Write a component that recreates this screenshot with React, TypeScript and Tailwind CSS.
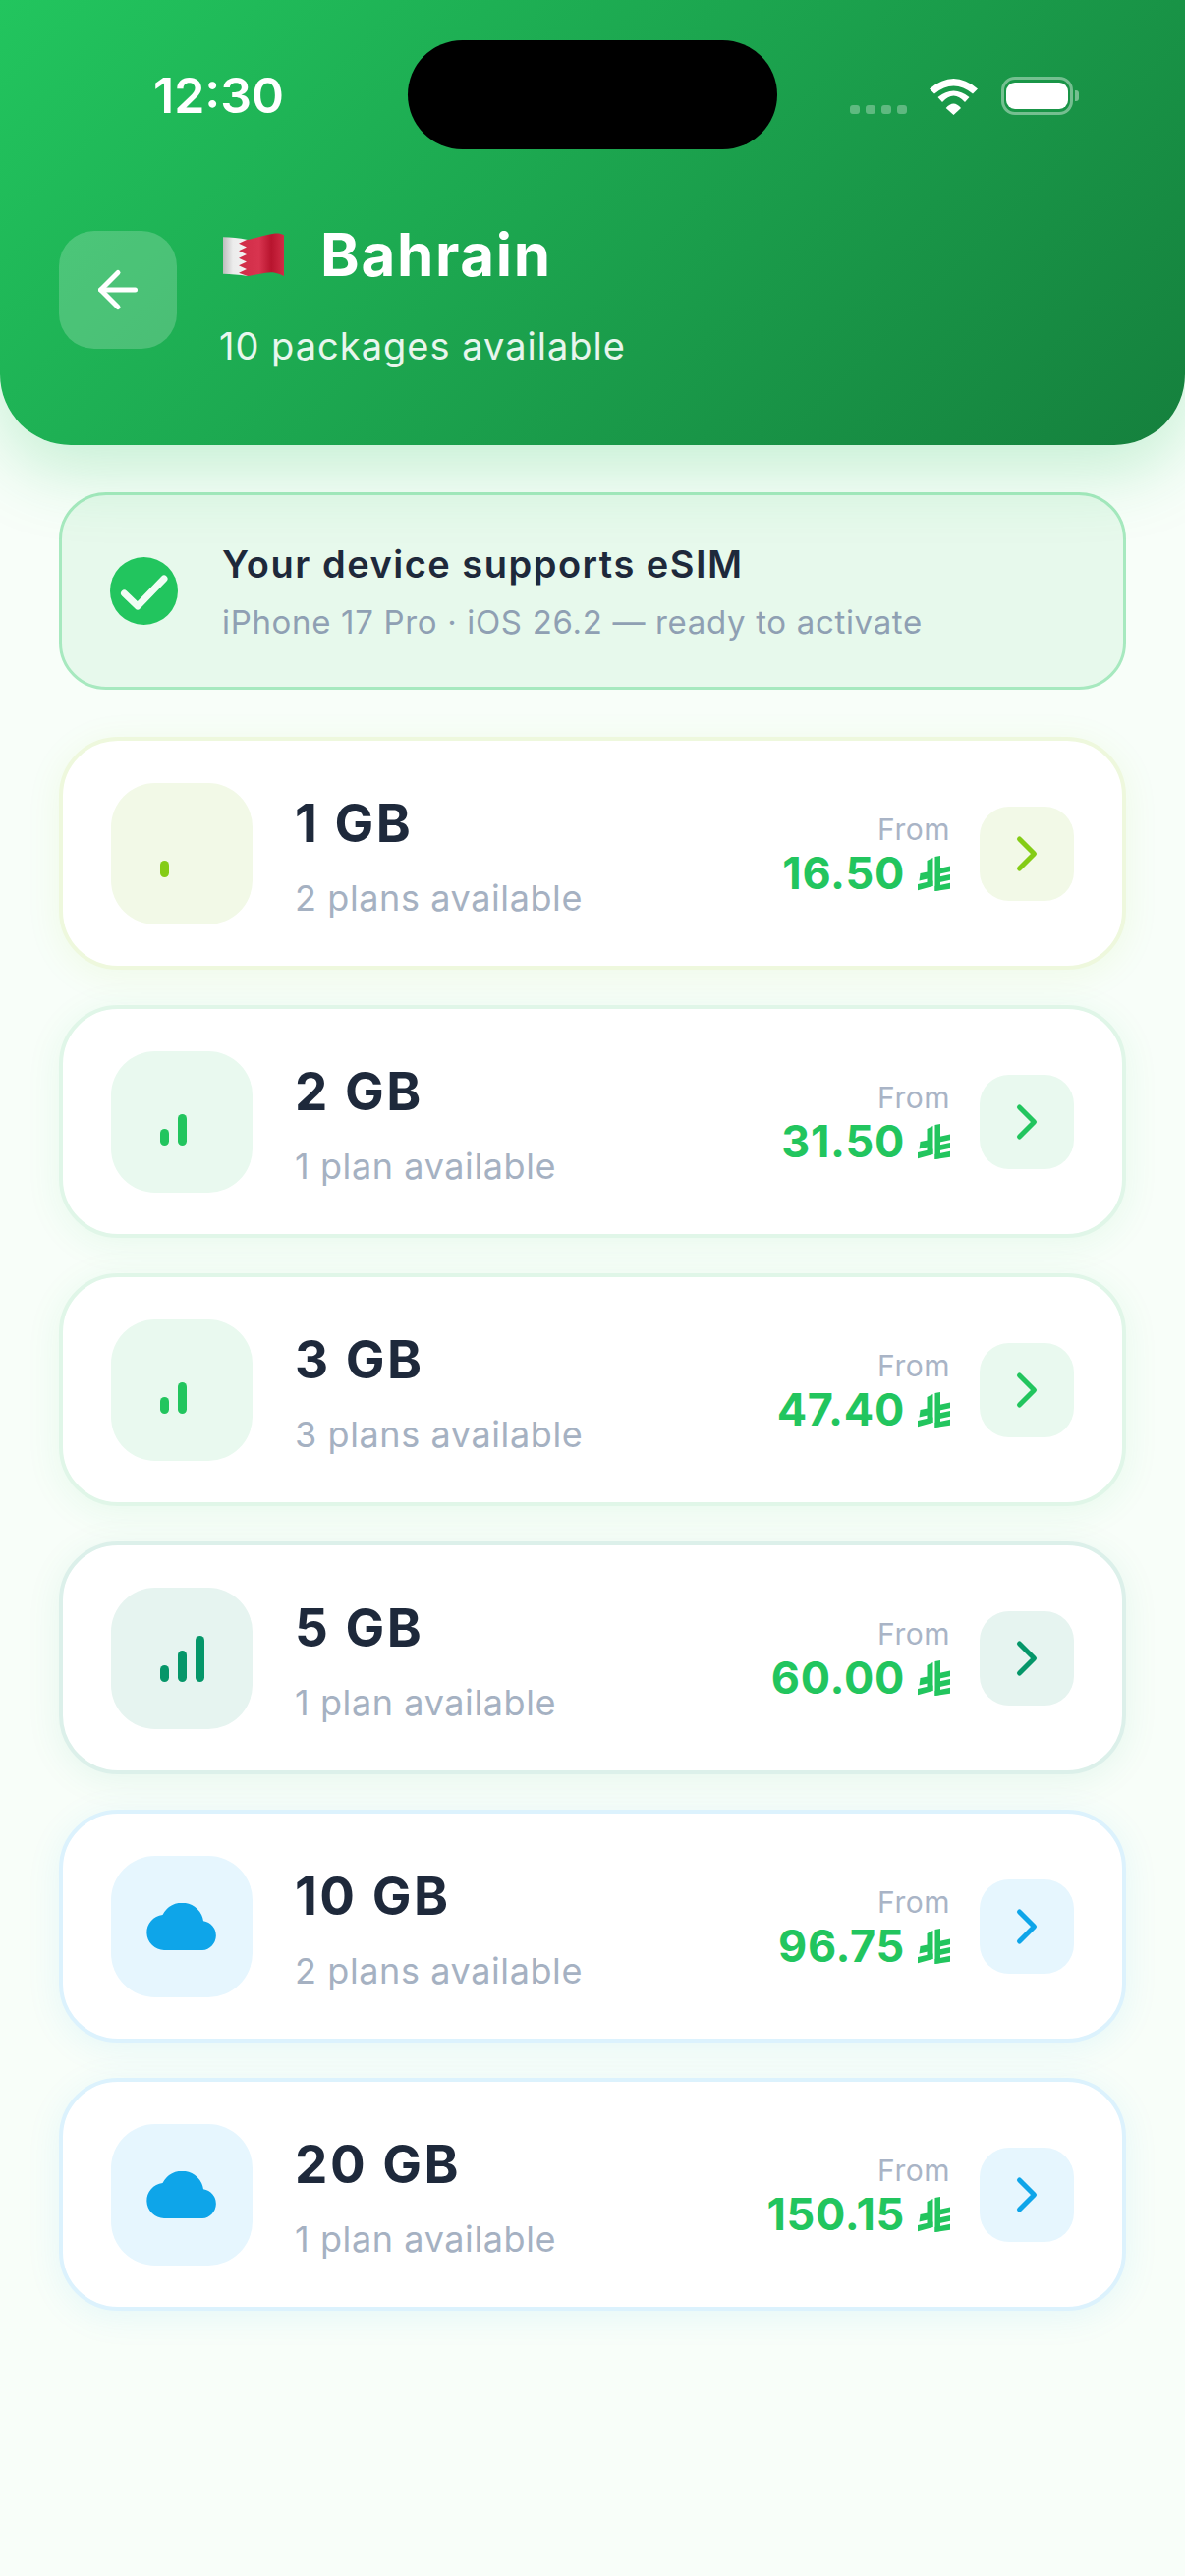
import React from "react";

type Accent = { border: string; soft: string; stroke: string; fill: string; shadow: string };

const lime: Accent = { border: "border-[#eef8dd]", soft: "bg-[#f2f9e7]", stroke: "stroke-[#84cc16]", fill: "fill-[#84cc16]", shadow: "shadow-[0_6px_36px_rgba(132,204,22,0.08)]" };
const green: Accent = { border: "border-[#e0f6e8]", soft: "bg-[#e9f9ef]", stroke: "stroke-[#22c55e]", fill: "fill-[#22c55e]", shadow: "shadow-[0_6px_36px_rgba(34,197,94,0.08)]" };
const teal: Accent = { border: "border-[#dcf0ea]", soft: "bg-[#e6f4f0]", stroke: "stroke-[#059669]", fill: "fill-[#059669]", shadow: "shadow-[0_6px_36px_rgba(5,150,105,0.08)]" };
const sky: Accent = { border: "border-[#dcf2fd]", soft: "bg-[#e6f6fe]", stroke: "stroke-[#0ea5e9]", fill: "fill-[#0ea5e9]", shadow: "shadow-[0_6px_36px_rgba(14,165,233,0.08)]" };

const rows = [
  { gb: "1 GB", plans: "2 plans available", price: "16.50", accent: lime, bars: 1 },
  { gb: "2 GB", plans: "1 plan available", price: "31.50", accent: green, bars: 2 },
  { gb: "3 GB", plans: "3 plans available", price: "47.40", accent: green, bars: 2 },
  { gb: "5 GB", plans: "1 plan available", price: "60.00", accent: teal, bars: 3 },
  { gb: "10 GB", plans: "2 plans available", price: "96.75", accent: sky, bars: 0 },
  { gb: "20 GB", plans: "1 plan available", price: "150.15", accent: sky, bars: 0 },
];

function Bars({ count, cls }: { count: number; cls: string }) {
  return (
    <svg width="45" height="48" viewBox="0 0 45 48" className={cls}>
      <rect x="0" y="31" width="9" height="17" rx="4.5" />
      {count > 1 && <rect x="18" y="16" width="9" height="32" rx="4.5" />}
      {count > 2 && <rect x="36" y="1" width="9" height="47" rx="4.5" />}
    </svg>
  );
}

function Cloud({ cls }: { cls: string }) {
  return (
    <svg width="72" height="48" viewBox="0 0 72 48" className={cls}>
      <path d="M18 48A18 18 0 0 1 16.5 12.1A22 22 0 0 1 58 18.2A15 15 0 0 1 57 48Z" />
    </svg>
  );
}

function Riyal() {
  return (
    <svg width="33" height="36" viewBox="0 0 33 36" className="fill-[#22c55e] shrink-0">
      <path d="M9.5 5L15.5 2V31H9.5Z" />
      <path d="M17.5 1L23 0V35L17.5 36Z" />
      <path d="M2.5 18L10 16.5V23.5L1.5 25.4Z" />
      <path d="M0 29L15.5 25.5V31L0 35.2Z" />
      <path d="M22.5 12.8L33 10.5V16.3L22.5 18.5Z" />
      <path d="M22.5 21.2L33 19V24.8L22.5 27Z" />
      <path d="M17.5 31L33 27.8V33.8L17.5 36Z" />
    </svg>
  );
}

function Flag() {
  return (
    <svg width="64" height="45" viewBox="0 1 64 42" preserveAspectRatio="none">
      <defs>
        <linearGradient id="red" x1="0" y1="0" x2="1" y2="0">
          <stop offset="0" stopColor="#d02c47" />
          <stop offset="0.45" stopColor="#d8344f" />
          <stop offset="0.72" stopColor="#b8142e" />
          <stop offset="1" stopColor="#d02c46" />
        </linearGradient>
        <linearGradient id="white" x1="0" y1="0" x2="1" y2="0">
          <stop offset="0" stopColor="#bdbdbd" />
          <stop offset="0.4" stopColor="#ececec" />
          <stop offset="1" stopColor="#f2f2f2" />
        </linearGradient>
      </defs>
      <path d="M0 5C8 5 16 6 25 7.5V42C16 41 8 40 0 40Z" fill="url(#white)" />
      <path d="M24 7.5L16 11L24 14.5L16 18L24 21.5L16 25L24 28.5L16 32L24 35.5L16 39L25 42C34 41.5 44 37.5 53 39C57 39.8 60 41 62 42V3C59 1.5 56 1.2 53 1.5C43 2.5 34 6.5 24 7.5Z" fill="url(#red)" />
    </svg>
  );
}

function Wifi() {
  return (
    <svg width="49" height="37" viewBox="0 0 49 37" className="fill-white">
      <path d="M0 10.5Q24.5 -10.5 49 10.5L44 15.5Q24.5 -0.5 5 15.5Z" />
      <path d="M8.5 19Q24.5 6 40.5 19L36 24Q24.5 11 13 24Z" />
      <path d="M16.7 30Q24.5 21 32 30L24.5 37Z" />
    </svg>
  );
}

function Row({ r }: { r: (typeof rows)[number] }) {
  const a = r.accent;
  return (
    <div className={`flex h-[237px] items-center rounded-[60px] border-4 bg-white pl-[49px] pr-[49px] ${a.border} ${a.shadow}`}>
      <div className={`flex h-[144px] w-[144px] shrink-0 items-center justify-center rounded-[45px] ${a.soft}`}>
        {r.bars > 0 ? <Bars count={r.bars} cls={a.fill} /> : <Cloud cls={a.fill} />}
      </div>
      <div className="ml-[43px] mt-[5px] flex flex-col">
        <span className="text-[53px] leading-[62px] font-bold tracking-[2.5px] text-[#1e293b]">{r.gb}</span>
        <span className="mt-[23px] text-[36px] leading-[44px] tracking-[0.6px] text-[#a5b1c2]">{r.plans}</span>
      </div>
      <div className="ml-auto mt-[4px] flex flex-col items-end">
        <span className="text-[30px] leading-[36px] tracking-[0.5px] text-[#a9b4c6]">From</span>
        <span className="flex items-center gap-[13px] text-[45px] leading-[54px] font-bold tracking-[0.7px] text-[#22c55e]">
          {r.price}
          <Riyal />
        </span>
      </div>
      <div className={`ml-[30px] flex h-[96px] w-[96px] shrink-0 items-center justify-center rounded-[30px] ${a.soft}`}>
        <svg width="60" height="60" viewBox="0 0 24 24" fill="none" strokeWidth="2" strokeLinecap="round" strokeLinejoin="round" className={a.stroke}>
          <path d="m9 18 6-6-6-6" />
        </svg>
      </div>
    </div>
  );
}

export default function App() {
  return (
    <div className="min-h-[2622px] w-[1206px] bg-[#f8fef9] font-['Inter',sans-serif]">
      <header className="relative h-[453px] rounded-b-[72px] bg-[linear-gradient(135deg,#22c55e,#15803d)] shadow-[0_24px_72px_rgba(34,197,94,0.25)]">
        <div className="absolute left-[415px] top-[41px] h-[111px] w-[376px] rounded-[56px] bg-black" />
        <div className="flex h-[117px] items-end pl-[156px] pr-[114px]">
          <span className="text-[50px] leading-[39px] font-semibold text-white">12:30</span>
          <div className="ml-auto flex items-end">
            <div className="mb-[1px] flex gap-[6px]">
              <span className="h-[9px] w-[10px] rounded-[3px] bg-white/30" />
              <span className="h-[9px] w-[10px] rounded-[3px] bg-white/30" />
              <span className="h-[9px] w-[10px] rounded-[3px] bg-white/30" />
              <span className="h-[9px] w-[10px] rounded-[3px] bg-white/30" />
            </div>
            <div className="ml-[23px]"><Wifi /></div>
            <div className="relative ml-[24px] flex h-[39px] w-[73px] items-center justify-center rounded-[14px] border-[3px] border-white/40">
              <span className="h-[27px] w-[63px] rounded-[9px] bg-white" />
              <span className="absolute -right-[9px] top-[11px] h-[11px] w-[4px] rounded-r-[3px] bg-white/40" />
            </div>
          </div>
        </div>
        <div className="mt-[106px] flex items-start pl-[60px]">
          <button className="mt-[12px] flex h-[120px] w-[120px] items-center justify-center rounded-[36px] bg-white/20">
            <svg width="60" height="60" viewBox="0 0 24 24" fill="none" stroke="white" strokeWidth="2" strokeLinecap="round" strokeLinejoin="round">
              <path d="m12 19-7-7 7-7" />
              <path d="M19 12H5" />
            </svg>
          </button>
          <div className="ml-[43px] flex flex-col">
            <div className="flex h-[72px] items-center">
              <span className="ml-[4px] flex"><Flag /></span>
              <span className="ml-[35px] text-[60px] leading-[72px] font-bold tracking-[1.7px] text-white">Bahrain</span>
            </div>
            <span className="mt-[34px] text-[38px] leading-[46px] tracking-[1px] text-white/90">10 packages available</span>
          </div>
        </div>
      </header>
      <main className="flex flex-col px-[60px] pt-[48px]">
        <div className="flex h-[201px] items-center rounded-[48px] border-[3px] border-[#a7e9bf] bg-[#e7f9ec] pl-[49px]">
          <svg width="69" height="69" viewBox="0 0 69 69" fill="none" className="shrink-0">
            <circle cx="34.5" cy="34.5" r="34.5" fill="#22c55e" />
            <path d="M14.5 37L28 50L55 22" stroke="#f0fdf4" strokeWidth="7" strokeLinecap="round" strokeLinejoin="round" />
          </svg>
          <div className="ml-[45px] flex flex-col">
            <span className="text-[38px] leading-[46px] font-semibold tracking-[1.5px] text-[#1e293b]">Your device supports eSIM</span>
            <span className="mt-[16px] text-[33px] leading-[40px] tracking-[0.67px] text-[#8fa0b3]">iPhone 17 Pro · iOS 26.2 — ready to activate</span>
          </div>
        </div>
        <div className="mt-[48px] flex flex-col gap-[36px]">
          {rows.map((r) => (
            <Row key={r.gb} r={r} />
          ))}
        </div>
      </main>
    </div>
  );
}
